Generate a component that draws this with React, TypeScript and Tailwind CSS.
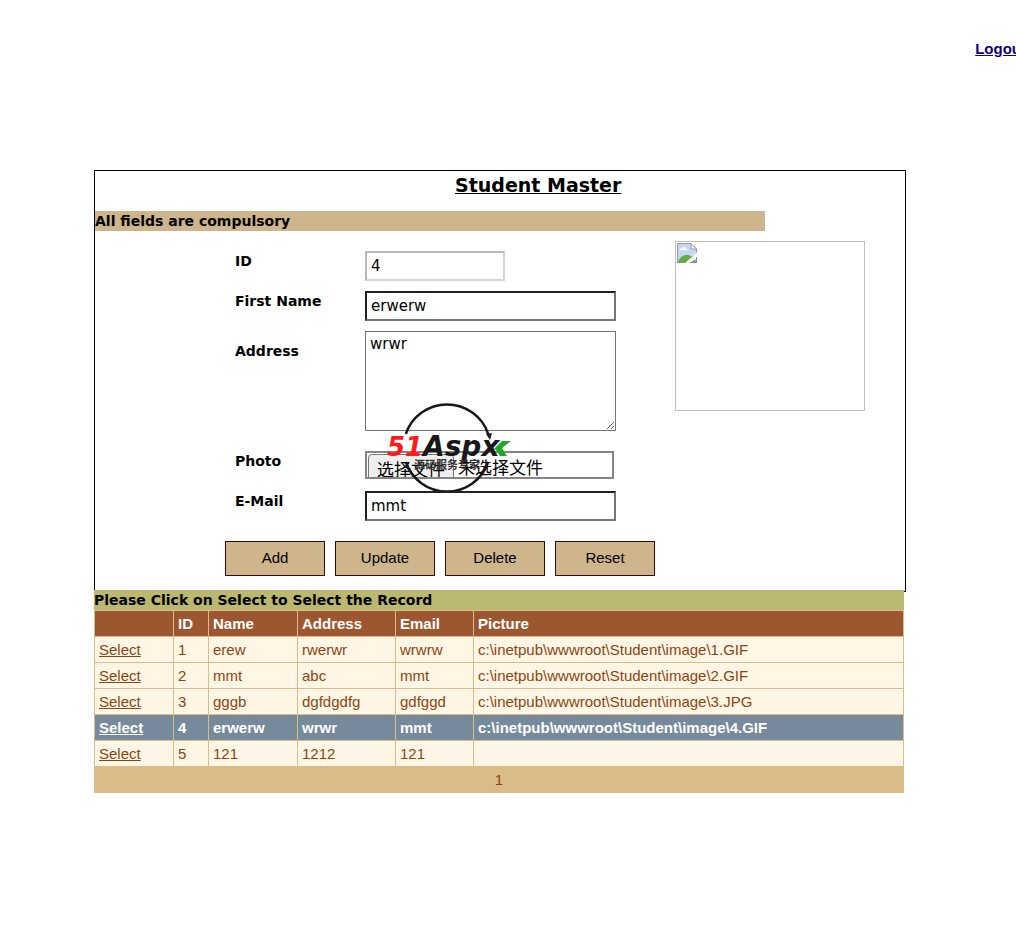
import type { ReactNode } from 'react'

interface Student {
  id: number
  name: string
  address: string
  email: string
  picture: string
}

const students: Student[] = [
  { id: 1, name: 'erew', address: 'rwerwr', email: 'wrwrw', picture: 'c:\\inetpub\\wwwroot\\Student\\image\\1.GIF' },
  { id: 2, name: 'mmt', address: 'abc', email: 'mmt', picture: 'c:\\inetpub\\wwwroot\\Student\\image\\2.GIF' },
  { id: 3, name: 'gggb', address: 'dgfdgdfg', email: 'gdfggd', picture: 'c:\\inetpub\\wwwroot\\Student\\image\\3.JPG' },
  { id: 4, name: 'erwerw', address: 'wrwr', email: 'mmt', picture: 'c:\\inetpub\\wwwroot\\Student\\image\\4.GIF' },
  { id: 5, name: '121', address: '1212', email: '121', picture: '' },
]

const selectedId = 4

const columns = ['ID', 'Name', 'Address', 'Email', 'Picture']

const actions = ['Add', 'Update', 'Delete', 'Reset']

const inputClass =
  'block h-[30px] w-full rounded-none border-2 border-t-[#212121] border-l-[#212121] border-r-[#767676] border-b-[#767676] bg-white px-1 text-[15px] text-black outline-none'

function Row({ id, label, className = '', children }: { id: string; label: string; className?: string; children: ReactNode }) {
  return (
    <div className="flex items-start">
      <label htmlFor={id} className={`w-[130px] shrink-0 text-sm leading-5 font-bold ${className}`}>
        {label}
      </label>
      <div className="relative min-w-0 flex-1">{children}</div>
    </div>
  )
}

function BrokenImage() {
  return (
    <svg width="20" height="20" viewBox="0 0 20 20" aria-hidden="true">
      <path d="M.5.5H14l5.500 5.500v13.500H.5z" fill="#c6d6f5" stroke="#9a9a9a" />
      <path d="M3 7c0-1.200 1-1.800 2-1.700.5-1.700 3.200-1.700 3.700.1 1.300-.1 2 .6 2 1.600z" fill="#fff" />
      <path d="M1 19c1.500-4.500 5-7 9-7s7.500 2.500 9 7z" fill="#62ad41" />
      <path d="M14 .5V6h5.500z" fill="#fff" stroke="#9a9a9a" />
      <path d="M20 9.500v5L13.500 20H8z" fill="#fff" />
      <path d="M0 19.500h8.500M13 19.500h6.500V14" fill="none" stroke="#8a8a8a" />
    </svg>
  )
}

function Watermark() {
  return (
    <svg
      className="pointer-events-none absolute top-[-48px] left-[20px]"
      width="130"
      height="92"
      viewBox="0 0 130 92"
      aria-hidden="true"
    >
      <g fill="none" stroke="#181818" strokeWidth="2.500">
        <path d="M20.800 31A43.500 43.500 0 0 1 103.200 31" />
        <path d="M20.800 59A43.500 43.500 0 0 0 103.200 59" />
      </g>
      <path d="M101 31l6-1-2 7z" fill="#181818" />
      <g fontFamily="DejaVu Sans" fontWeight="bold" fontStyle="italic">
        <text x="2" y="53" fontSize="26" fill="#fb1b1b">
          51
        </text>
        <text x="38" y="53" fontSize="28" fill="#181818">
          Aspx
        </text>
      </g>
      <path d="M109 46l8-8h9l-9 7 5 8h-7l-4-6z" fill="#22a829" />
      <text x="29" y="66" fontFamily="Noto Sans CJK SC" fontSize="11" fontWeight="bold" fill="#333">
        源码服务专家
      </text>
    </svg>
  )
}

export default function App() {
  return (
    <div className="min-h-screen overflow-x-hidden bg-white text-black [font-family:'DejaVu_Sans','Noto_Sans_CJK_SC',sans-serif]">
      <header className="flex h-[170px] justify-end pt-[39px]">
        <a
          href="#logout"
          className="-mr-2.5 h-5 text-[15px] leading-5 font-bold text-[#10007b] underline [font-family:'Liberation_Sans',sans-serif]"
        >
          Logout
        </a>
      </header>

      <main className="mr-[110px] ml-[94px]">
        <form className="border border-black pb-[15px]">
          <h1 className="pl-[360px] text-[19px] leading-7 font-bold underline">Student Master</h1>
          <p className="mt-3 mr-[140px] bg-[#ceb58c] text-sm leading-5 font-bold">All fields are compulsory</p>

          <div className="flex justify-between pt-2.5 pr-10 pl-[140px]">
            <div className="flex w-[381px] flex-col gap-2.5 pt-2.5">
              <Row id="student-id" label="ID">
                <input
                  id="student-id"
                  defaultValue="4"
                  disabled
                  className="block h-[30px] w-[140px] rounded-none border-2 border-t-[#b9b9b9] border-l-[#b9b9b9] border-r-[#d4d4d4] border-b-[#d4d4d4] bg-white px-1 text-[15px] text-black"
                />
              </Row>
              <Row id="first-name" label="First Name">
                <input id="first-name" defaultValue="erwerw" className={inputClass} />
              </Row>
              <Row id="address" label="Address" className="pt-2.5">
                <textarea
                  id="address"
                  defaultValue="wrwr"
                  className="block h-[100px] w-full rounded-none border border-[#767676] bg-white px-1 py-0.5 text-[15px] leading-5 outline-none"
                />
              </Row>
              <div className="pt-2.5 pb-0.5">
                <Row id="photo" label="Photo">
                  <label
                    htmlFor="photo"
                    className="mr-0.5 flex h-[28px] overflow-hidden border-2 border-[#858585] text-[17px] leading-[30px]"
                  >
                    <span className="mt-px ml-px h-[30px] rounded-sm border border-[#767676] bg-[#efefef] px-2">
                      选择文件
                    </span>
                    <span className="pl-1">未选择文件</span>
                  </label>
                  <input id="photo" type="file" className="sr-only" />
                  <Watermark />
                </Row>
              </div>
              <Row id="email" label="E-Mail">
                <input id="email" defaultValue="mmt" className={inputClass} />
              </Row>
            </div>

            <div className="h-[170px] w-[190px] border border-[#c0c0c0] p-px" role="img">
              <BrokenImage />
            </div>
          </div>

          <div className="flex gap-2.5 pt-5 pl-[130px] [font-family:'Liberation_Sans',sans-serif]">
            {actions.map((action) => (
              <button
                key={action}
                type="button"
                className="h-[35px] w-[100px] border border-[#390800] bg-[#ceb58c] text-[15px]"
              >
                {action}
              </button>
            ))}
          </div>
        </form>

        <section className="relative -mt-0.5 mr-0.5">
          <h2 className="bg-[#bbb870] text-sm leading-5 font-bold">Please Click on Select to Select the Record</h2>
          <table className="w-full table-fixed border-collapse text-left text-[15px] leading-5 text-[#8c4510] [font-family:'Liberation_Sans',sans-serif]">
            <colgroup>
              <col className="w-[79px]" />
              <col className="w-[35px]" />
              <col className="w-[89px]" />
              <col className="w-[98px]" />
              <col className="w-[78px]" />
              <col />
            </colgroup>
            <thead>
              <tr className="h-[26px] bg-[#9c5730] text-white">
                <th className="border border-[#dbbb87]" />
                {columns.map((column) => (
                  <th key={column} className="border border-[#dbbb87] px-1">
                    {column}
                  </th>
                ))}
              </tr>
            </thead>
            <tbody>
              {students.map((student) => (
                <tr
                  key={student.id}
                  className={
                    student.id === selectedId ? 'h-[26px] bg-[#778a9c] font-bold text-white' : 'h-[26px] bg-[#fff6e6]'
                  }
                >
                  <td className="border border-[#dbbb87] px-1">
                    <a href={`#select-${student.id}`} className="underline">
                      Select
                    </a>
                  </td>
                  <td className="border border-[#dbbb87] px-1">{student.id}</td>
                  <td className="border border-[#dbbb87] px-1">{student.name}</td>
                  <td className="border border-[#dbbb87] px-1">{student.address}</td>
                  <td className="border border-[#dbbb87] px-1">{student.email}</td>
                  <td className="border border-[#dbbb87] px-1">{student.picture}</td>
                </tr>
              ))}
            </tbody>
            <tfoot>
              <tr className="h-[26px] bg-[#dbbb87]">
                <td colSpan={6} className="border border-[#dbbb87] text-center">
                  1
                </td>
              </tr>
            </tfoot>
          </table>
        </section>
      </main>
    </div>
  )
}
